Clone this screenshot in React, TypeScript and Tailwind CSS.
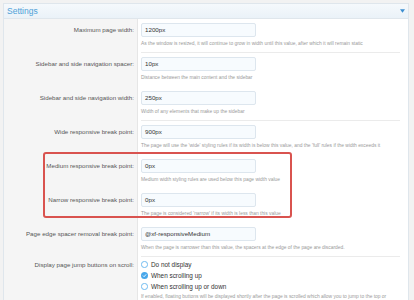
const rows = [
  {
    label: 'Maximum page width:',
    value: '1200px',
    hint: 'As the window is resized, it will continue to grow in width until this value, after which it will remain static',
    sep: true,
  },
  {
    label: 'Sidebar and side navigation spacer:',
    value: '10px',
    hint: 'Distance between the main content and the sidebar',
    sep: false,
  },
  {
    label: 'Sidebar and side navigation width:',
    value: '250px',
    hint: 'Width of any elements that make up the sidebar',
    sep: true,
  },
  {
    label: 'Wide responsive break point:',
    value: '900px',
    hint: "The page will use the 'wide' styling rules if its width is below this value, and the 'full' rules if the width exceeds it",
    sep: false,
  },
  {
    label: 'Medium responsive break point:',
    value: '0px',
    hint: 'Medium width styling rules are used below this page width value',
    sep: false,
  },
  {
    label: 'Narrow responsive break point:',
    value: '0px',
    hint: "The page is considered 'narrow' if its width is less than this value",
    sep: false,
  },
  {
    label: 'Page edge spacer removal break point:',
    value: '@xf-responsiveMedium',
    hint: 'When the page is narrower than this value, the spacers at the edge of the page are discarded.',
    sep: true,
  },
];

const radios = [
  { text: 'Do not display', checked: false },
  { text: 'When scrolling up', checked: true },
  { text: 'When scrolling up or down', checked: false },
];

function Radio({ checked }: { checked: boolean }) {
  if (checked) {
    return (
      <svg width="7" height="7" viewBox="0 0 14 14" className="shrink-0">
        <circle cx="7" cy="7" r="7" fill="#47a7eb" />
        <path d="M4 7.2 L6.2 9.4 L10.2 4.8" fill="none" stroke="#fff" strokeWidth="1.8" />
      </svg>
    );
  }
  return (
    <svg width="7" height="7" viewBox="0 0 14 14" className="shrink-0">
      <circle cx="7" cy="7" r="6.2" fill="#fff" stroke="#47a7eb" strokeWidth="1.5" />
    </svg>
  );
}

export default function App() {
  return (
    <div
      className="relative h-[300px] w-[414px] overflow-hidden bg-[#f2f2f2] pl-[3px] pr-[5px] pt-[3px]"
      style={{ fontFamily: '"Liberation Sans", Arial, sans-serif' }}
    >
      <div className="border border-[#dfe6ec] bg-white">
        {/* Header */}
        <div className="flex h-[15px] items-center justify-between border-b border-[#dfe6ec] bg-gradient-to-b from-[#f5f9fc] to-[#eaf2f8] pl-[3px] pr-[3px]">
          <span className="text-[8.5px] text-[#4ea1d8]">Settings</span>
          <svg width="5" height="4" viewBox="0 0 10 7">
            <path d="M0 0 L10 0 L5 7 Z" fill="#3b8ed0" />
          </svg>
        </div>

        {rows.map((r) => (
          <div key={r.label} className="flex">
            <div className="w-[133px] shrink-0 bg-[#f5f5f5] pr-[3px] pt-[4px] text-right text-[6.2px] leading-[14px] text-[#555]">
              {r.label}
            </div>
            <div className="flex-1 border-l border-[#e6e6e6] pl-[3px] pr-[8px]">
              <div className={`pt-[4px] ${r.sep ? 'border-b border-[#ebebeb] pb-[5px]' : 'pb-[6px]'}`}>
                <div className="flex h-[14px] w-[115px] items-center rounded-[2px] border border-[#dde6ee] bg-[#f7fbfe] pl-[3px] text-[6.2px] text-[#333]">
                  {r.value}
                </div>
                <div className="mt-[4px] whitespace-nowrap text-[4.9px] leading-[6px] text-[#9a9a9a]">{r.hint}</div>
              </div>
            </div>
          </div>
        ))}

        <div className="flex">
          <div className="w-[133px] shrink-0 bg-[#f5f5f5] pr-[3px] pt-[3px] text-right text-[6.2px] leading-[9px] text-[#555]">
            Display page jump buttons on scroll:
          </div>
          <div className="flex-1 border-l border-[#e6e6e6] pl-[3px] pr-[8px] pt-[3px]">
            <div className="flex flex-col gap-[2px]">
              {radios.map((o) => (
                <div key={o.text} className="flex h-[9px] items-center gap-[3px] text-[6.4px] text-[#333]">
                  <Radio checked={o.checked} />
                  <span>{o.text}</span>
                </div>
              ))}
            </div>
            <div className="mt-[3px] whitespace-nowrap text-[4.9px] leading-[6px] text-[#9a9a9a]">
              If enabled, floating buttons will be displayed shortly after the page is scrolled which allow you to jump to the top or
            </div>
          </div>
        </div>
      </div>

      {/* Annotation box */}
      <div className="absolute left-[43px] top-[152px] h-[66px] w-[249px] rounded-[3px] border-2 border-[#d9534f]" />
    </div>
  );
}
